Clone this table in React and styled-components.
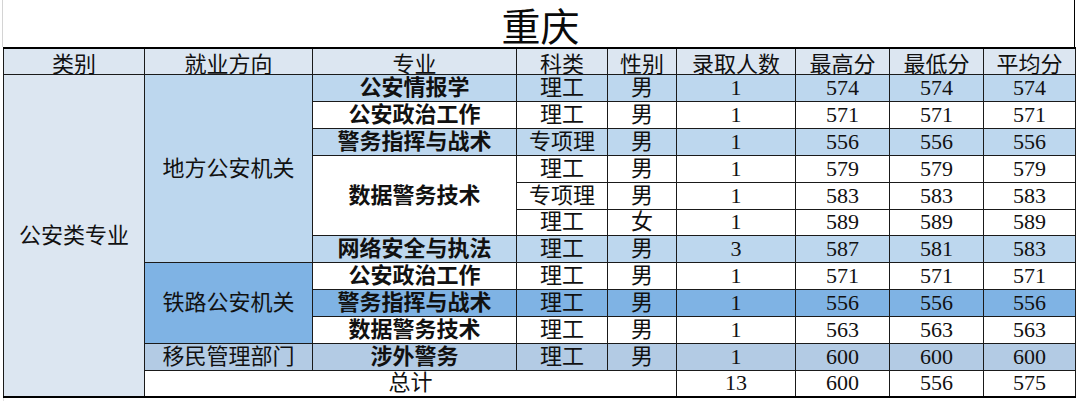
import React from 'react';
import styled, { createGlobalStyle } from 'styled-components';

const tones = {
  head: '#dce6f1',
  light: '#bdd7ee',
  mid: '#7fb3e4',
  grey: '#b3cbe4',
};

const rows = [
  { tone: 'light', major: '公安情报学', kind: '理工', sex: '男', n: 1, hi: 574, lo: 574, avg: 574 },
  { major: '公安政治工作', kind: '理工', sex: '男', n: 1, hi: 571, lo: 571, avg: 571 },
  { tone: 'light', major: '警务指挥与战术', kind: '专项理', sex: '男', n: 1, hi: 556, lo: 556, avg: 556 },
  { major: '数据警务技术', span: 3, kind: '理工', sex: '男', n: 1, hi: 579, lo: 579, avg: 579 },
  { skip: true, kind: '专项理', sex: '男', n: 1, hi: 583, lo: 583, avg: 583 },
  { skip: true, kind: '理工', sex: '女', n: 1, hi: 589, lo: 589, avg: 589 },
  { tone: 'light', major: '网络安全与执法', kind: '理工', sex: '男', n: 3, hi: 587, lo: 581, avg: 583 },
  { major: '公安政治工作', kind: '理工', sex: '男', n: 1, hi: 571, lo: 571, avg: 571 },
  { tone: 'mid', major: '警务指挥与战术', kind: '理工', sex: '男', n: 1, hi: 556, lo: 556, avg: 556 },
  { major: '数据警务技术', kind: '理工', sex: '男', n: 1, hi: 563, lo: 563, avg: 563 },
  { tone: 'grey', major: '涉外警务', kind: '理工', sex: '男', n: 1, hi: 600, lo: 600, avg: 600 },
];

// 就业方向 groups keyed by starting row
const directions = {
  0: { name: '地方公安机关', span: 7, tone: 'light' },
  7: { name: '铁路公安机关', span: 3, tone: 'mid' },
  10: { name: '移民管理部门', span: 1, tone: 'grey' },
};

const widths = [141, 168, 204, 91, 69, 119, 94, 94, 92];
const headers = ['类别', '就业方向', '专业', '科类', '性别', '录取人数', '最高分', '最低分', '平均分'];

export default function App() {
  return (
    <>
      <GlobalStyle />
      <Sheet>
        <TitleBar>
          <Title>重庆</Title>
        </TitleBar>
        <Table>
          <colgroup>
            {widths.map((w, i) => (
              <col key={i} style={{ width: w }} />
            ))}
          </colgroup>
          <thead>
            <Row>
              {headers.map(h => (
                <Head key={h}>{h}</Head>
              ))}
            </Row>
          </thead>
          <tbody>
            {rows.map((r, i) => {
              const dir = directions[i];
              return (
                <Row key={i}>
                  {i === 0 && (
                    <Cell rowSpan={12} $tone="head">
                      公安类专业
                    </Cell>
                  )}
                  {dir && (
                    <Cell rowSpan={dir.span} $tone={dir.tone}>
                      {dir.name}
                    </Cell>
                  )}
                  {!r.skip && (
                    <Cell rowSpan={r.span || 1} $tone={r.tone} $bold>
                      {r.major}
                    </Cell>
                  )}
                  <Cell $tone={r.tone}>{r.kind}</Cell>
                  <Cell $tone={r.tone}>{r.sex}</Cell>
                  <Cell $tone={r.tone}>{r.n}</Cell>
                  <Cell $tone={r.tone}>{r.hi}</Cell>
                  <Cell $tone={r.tone}>{r.lo}</Cell>
                  <Cell $tone={r.tone}>{r.avg}</Cell>
                </Row>
              );
            })}
            <Row>
              <Cell colSpan={4}>总计</Cell>
              <Cell>13</Cell>
              <Cell>600</Cell>
              <Cell>556</Cell>
              <Cell>575</Cell>
            </Row>
          </tbody>
        </Table>
        <Tail />
      </Sheet>
    </>
  );
}

const GlobalStyle = createGlobalStyle`
  html, body {
    margin: 0;
    padding: 0;
    background: #ffffff;
  }
`;

const Sheet = styled.div`
  width: 1080px;
  height: 401px;
  overflow: hidden;
  background: #ffffff;
  font-family: "Liberation Serif", "Noto Sans CJK SC", serif;
  color: #111;
`;

const TitleBar = styled.div`
  margin-left: 2px;
  width: 1073px;
  height: 47px;
  border-left: 1px solid #d4d4d4;
  border-right: 1px solid #000;
  box-sizing: border-box;
  display: flex;
  align-items: center;
  justify-content: center;
`;

const Title = styled.div`
  font-family: "Noto Sans CJK SC", sans-serif;
  font-size: 39px;
  line-height: 44px;
  height: 44px;
  margin-left: 4px;
  color: #0a0a0a;
`;

const Table = styled.table`
  margin-left: 3px;
  width: 1072px;
  table-layout: fixed;
  border-collapse: collapse;
  border-top: 2px solid #000;
  border-bottom: 2px solid #000;
`;

const Row = styled.tr`
  height: 26.85px;
`;

const Head = styled.th`
  background: ${tones.head};
  border: 1px solid #1a1a1a;
  font-family: "Noto Sans CJK SC", sans-serif;
  font-weight: 400;
  font-size: 22px;
  line-height: 1;
  padding: 0;
  text-align: center;
  vertical-align: middle;
  white-space: nowrap;
`;

const Cell = styled.td`
  background: ${p => (p.$tone ? tones[p.$tone] : '#ffffff')};
  border: 1px solid #1a1a1a;
  font-size: 22px;
  font-weight: ${p => (p.$bold ? 700 : 400)};
  line-height: 1;
  padding: 0;
  text-align: center;
  vertical-align: middle;
  white-space: nowrap;
  overflow: hidden;
`;

const Tail = styled.div`
  margin-left: 3px;
  width: 1072px;
  height: 6px;
  background-image: linear-gradient(to right, #e2e2e2 1px, transparent 1px);
  background-size: 100% 100%;
`;
